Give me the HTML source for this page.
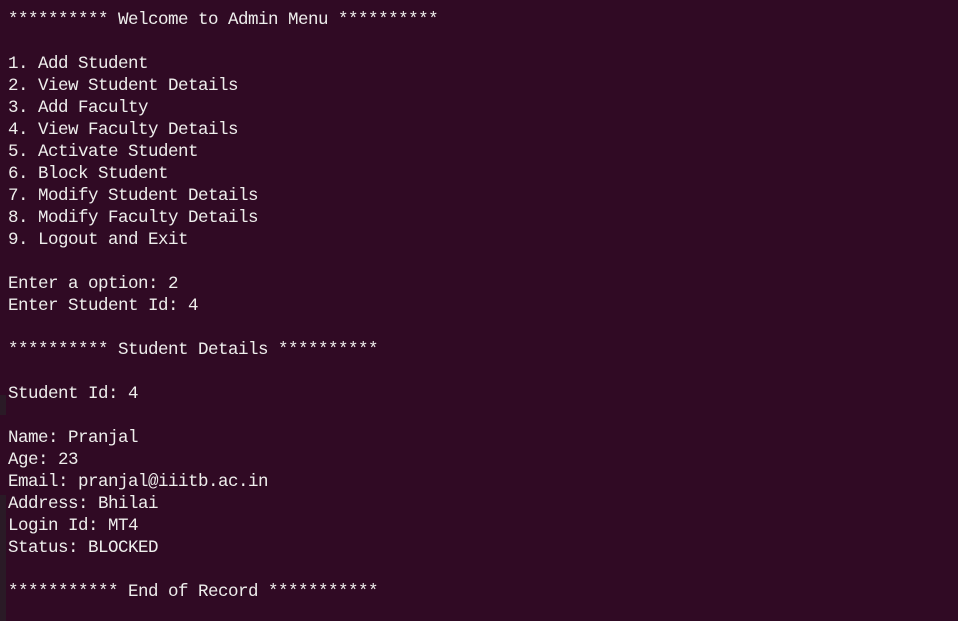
<!DOCTYPE html>
<html><head><meta charset="utf-8"><style>
html,body{margin:0;padding:0;}
body{width:958px;height:621px;background:#300a24;overflow:hidden;position:relative;}
pre{margin:0;position:absolute;left:8px;top:9px;font-family:"Liberation Mono",monospace;font-size:17.5px;letter-spacing:-0.5px;line-height:22px;color:#eeeeec;}
.strip{position:absolute;left:0;width:6px;background:#2a1a26;}
</style></head><body>
<div class="strip" style="top:395px;height:20px"></div>
<div class="strip" style="top:495px;height:126px"></div>
<pre>********** Welcome to Admin Menu **********

1. Add Student
2. View Student Details
3. Add Faculty
4. View Faculty Details
5. Activate Student
6. Block Student
7. Modify Student Details
8. Modify Faculty Details
9. Logout and Exit

Enter a option: 2
Enter Student Id: 4

********** Student Details **********

Student Id: 4

Name: Pranjal
Age: 23
Email: pranjal@iiitb.ac.in
Address: Bhilai
Login Id: MT4
Status: BLOCKED

*********** End of Record ***********</pre>
</body></html>
